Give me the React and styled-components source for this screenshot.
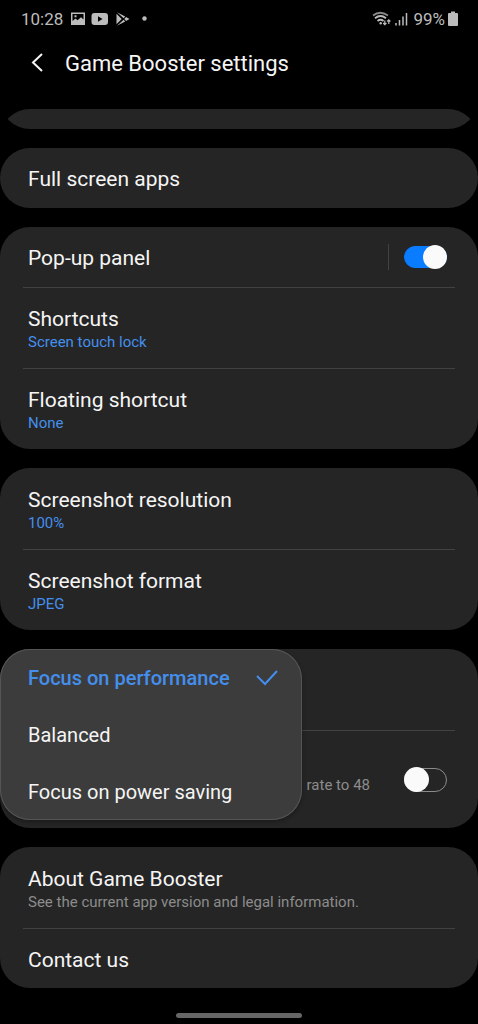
import React, { useState } from 'react'
import styled, { createGlobalStyle } from 'styled-components'

const GlobalStyle = createGlobalStyle`
    * {
        box-sizing: border-box;
    }
    body {
        margin: 0;
        background: #000;
        color: #f5f5f5;
        font-family: Roboto, "Noto Sans", sans-serif;
    }
    button {
        font-family: inherit;
        color: inherit;
        background: none;
        border: none;
        padding: 0;
        text-align: left;
        cursor: pointer;
    }
`

const focusOptions = ['Focus on performance', 'Balanced', 'Focus on power saving']

const StatusBar = () => {
    return <StatusWrapper>
        <time>10:28</time>
        <svg className="notifications" width="78" height="16" viewBox="0 0 78 16" fill="#bcbcbc" aria-hidden="true">
            <path fillRule="evenodd" d="M1 1.500h14v12.500H1zM2.500 3v7l3-2.500 2 1.800 3.500-3 2.500 2.200V3zM4.500 4.300h2v2h-2z" />
            <path fillRule="evenodd" d="M24.500 2h10.500q3 0 3 3v6q0 3-3 3H24.500q-3 0-3-3V5q0-3 3-3zM28 5.300v5.400l4.500-2.700z" />
            <path d="M46.500 2.800l5.200 5.200-5.200 5.200zM47 1.300l8.200 4.300-1.600 1.700zM47 14.700l8.200-4.300-1.600-1.700zM54.300 8l1.800-1.900L59.500 8l-3.400 1.900z" />
            <circle cx="74.500" cy="7.500" r="2.200" />
        </svg>
        <svg className="signal" width="38" height="16" viewBox="0 0 38 16" fill="none" stroke="#bcbcbc" aria-hidden="true">
            <path d="M1 4.500q7-5.500 15 0" stroke="#888" strokeWidth="1.800" />
            <path d="M3 7.300q5.500-4.500 11 0M5.500 10q3-2.500 6 0" strokeWidth="1.800" />
            <path d="M12.800 9.500v4M11.200 12l1.600 1.700 1.600-1.700M16.800 13V9M15.200 10.500l1.600-1.700 1.600 1.700" strokeWidth="1.200" />
            <circle cx="8.700" cy="12.300" r="1.200" fill="#bcbcbc" stroke="none" />
            <path d="M24 12v2.500M27.500 9v5.500M31 5.500v9M34.500 2v12.500" strokeWidth="1.500" />
        </svg>
        <span>99%</span>
        <svg width="10" height="16" viewBox="0 0 10 16" fill="#bcbcbc" aria-hidden="true">
            <path d="M3 0.500h4v1.500h2q1 0 1 1V14q0 1-1 1H1q-1 0-1-1V3q0-1 1-1h2z" />
        </svg>
    </StatusWrapper>
}

const Option = ({ title, value, note }) => {
    return <Row as="button" type="button" $tall={Boolean(value || note)}>
        <Text>
            <Title>{title}</Title>
            {value && <Detail $link>{value}</Detail>}
            {note && <Detail>{note}</Detail>}
        </Text>
    </Row>
}

const App = () => {
    const [focus, setFocus] = useState(focusOptions[0])
    const [popup, setPopup] = useState(true)
    const [limit, setLimit] = useState(false)

    return <Page>
        <GlobalStyle />
        <StatusBar />
        <Header>
            <button type="button" aria-label="Back">
                <svg width="12" height="20" viewBox="0 0 12 20" fill="none" stroke="#f5f5f5" strokeWidth="2">
                    <path d="M11 1L2 9.500l9 8.500" />
                </svg>
            </button>
            <h1>Game Booster settings</h1>
        </Header>
        <List>
            <ScrolledCard />
            <Card>
                <Option title="Full screen apps" />
            </Card>
            <Card>
                <Row>
                    <Text as="label" htmlFor="popup-panel">
                        <Title>Pop-up panel</Title>
                    </Text>
                    <Separator />
                    <Switch id="popup-panel" checked={popup} onChange={() => setPopup(!popup)} />
                </Row>
                <Option title="Shortcuts" value="Screen touch lock" />
                <Option title="Floating shortcut" value="None" />
            </Card>
            <Card>
                <Option title="Screenshot resolution" value="100%" />
                <Option title="Screenshot format" value="JPEG" />
            </Card>
            <Card>
                <Row $tall />
                <LimitRow>
                    <label htmlFor="frame-limit">rate to 48</label>
                    <Switch id="frame-limit" checked={limit} onChange={() => setLimit(!limit)} />
                </LimitRow>
                <Menu role="listbox">
                    {focusOptions.map((option) => {
                        const selected = option === focus
                        return <MenuItem
                            key={option}
                            type="button"
                            role="option"
                            aria-selected={selected}
                            $selected={selected}
                            onClick={() => setFocus(option)}
                        >
                            {option}
                            {selected && <svg width="22" height="16" viewBox="0 0 22 16" fill="none" stroke="#448fed" strokeWidth="2">
                                <path d="M1 6l8 8L21 1" />
                            </svg>}
                        </MenuItem>
                    })}
                </Menu>
            </Card>
            <Card>
                <Option title="About Game Booster" note="See the current app version and legal information." />
                <Option title="Contact us" />
            </Card>
        </List>
        <HomeBar />
    </Page>
}

const Page = styled.div`
    display: flex;
    flex-direction: column;
    min-height: 100vh;
`
const StatusWrapper = styled.div`
    display: flex;
    align-items: center;
    height: 38px;
    padding: 0 20px 0 21px;
    color: #bcbcbc;
    font-size: 17px;
    .notifications {
        margin-left: 7px;
    }
    .signal {
        margin-left: auto;
        margin-right: 3px;
    }
    span {
        margin-right: 3px;
    }
`
const Header = styled.header`
    display: flex;
    align-items: center;
    gap: 22px;
    height: 50px;
    padding: 0 31px;
    button {
        display: flex;
    }
    h1 {
        margin: 0;
        font-size: 22px;
        font-weight: 400;
    }
`
const List = styled.main`
    display: flex;
    flex-direction: column;
    gap: 19px;
    margin-top: 21px;
    border-radius: 30px 30px 0 0;
    overflow: hidden;
`
const Card = styled.section`
    position: relative;
    border-radius: 30px;
    background: #252525;
`
/* last strip of the card that has scrolled under the header */
const ScrolledCard = styled(Card)`
    height: 60px;
    margin-top: -40px;
`
const Row = styled.div`
    display: flex;
    align-items: center;
    width: calc(100% - 46px);
    min-height: ${({ $tall }) => ($tall ? 81 : 60)}px;
    margin: 0 23px;
    padding: 0 8px 0 5px;
    & + & {
        border-top: 1px solid #424242;
    }
`
const LimitRow = styled(Row)`
    justify-content: flex-end;
    gap: 34px;
    min-height: 98px;
    border-top: 1px solid #424242;
    label {
        padding-top: 10px;
        color: #8c8c8c;
        font-size: 15px;
        line-height: 18px;
    }
`
const Text = styled.span`
    display: flex;
    flex: 1;
    flex-direction: column;
    padding-top: 2px;
`
const Title = styled.span`
    font-size: 21px;
    line-height: 26px;
`
const Detail = styled.span`
    color: ${({ $link }) => ($link ? '#448fed' : '#8c8c8c')};
    font-size: 15px;
    line-height: 20px;
`
const Separator = styled.span`
    width: 1px;
    height: 26px;
    margin-right: 15px;
    background: #424242;
`
const Switch = styled.input.attrs({ type: 'checkbox', role: 'switch' })`
    appearance: none;
    display: flex;
    align-items: center;
    flex: none;
    width: 43px;
    height: 24px;
    margin: 0;
    border: 1px solid #8c8c8c;
    border-radius: 12px;
    cursor: pointer;
    &::before {
        content: '';
        width: 25px;
        height: 25px;
        margin: 0 -1px;
        border-radius: 50%;
        background: #fafafa;
    }
    &:checked {
        justify-content: flex-end;
        height: 22px;
        border-color: #0a7cff;
        background: #0a7cff;
    }
    &:checked::before {
        width: 24px;
        height: 24px;
    }
`
const Menu = styled.div`
    position: absolute;
    top: 0;
    left: 0;
    display: flex;
    flex-direction: column;
    width: 302px;
    border-radius: 30px;
    background: #3c3c3c;
    box-shadow: inset 0 0 0 1px #555, 0 2px 4px rgba(0, 0, 0, 0.3);
`
const MenuItem = styled.button`
    && {
        display: flex;
        align-items: center;
        justify-content: space-between;
        height: 57px;
        padding: 0 24px 0 28px;
        color: ${({ $selected }) => ($selected ? '#448fed' : '#f5f5f5')};
        font-size: 20px;
        font-weight: ${({ $selected }) => ($selected ? 500 : 400)};
    }
`
const HomeBar = styled.div`
    width: 126px;
    height: 5px;
    margin: auto auto 6px;
    border-radius: 3px;
    background: #666;
`

export default App
